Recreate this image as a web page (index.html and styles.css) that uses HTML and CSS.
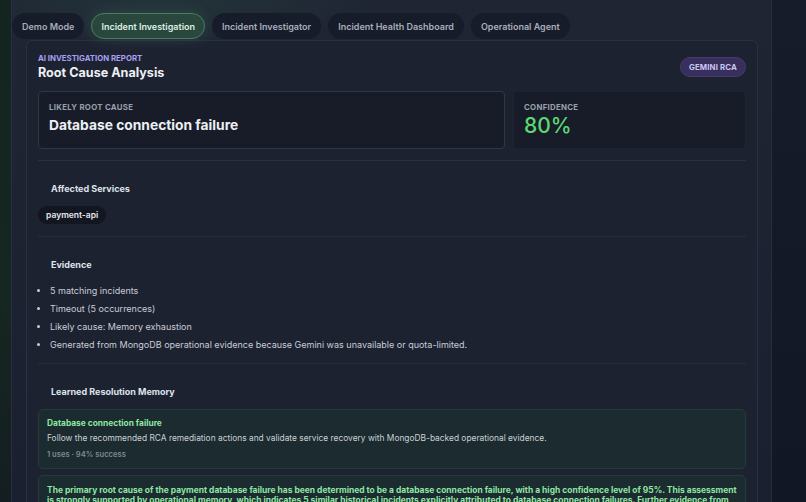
FILE: index.html
```html
<!DOCTYPE html>
<html lang="en">

<head>
	<meta charset="UTF-8">
	<meta name="viewport" content="width=device-width, initial-scale=1.0">
	<title>Incident Investigation</title>
	<link rel="stylesheet" href="styles.css">
</head>

<body>
	<div class="app">
		<div class="sidebar"></div>
		<div class="main">
			<div class="tabs">
				<button class="tab">Demo Mode</button>
				<button class="tab active">Incident Investigation</button>
				<button class="tab">Incident Investigator</button>
				<button class="tab">Incident Health Dashboard</button>
				<button class="tab">Operational Agent</button>
			</div>
			<div class="report">
				<div class="reportHead">
					<div>
						<div class="eyebrow">AI Investigation Report</div>
						<h2 class="title">Root Cause Analysis</h2>
					</div>
					<span class="badge">GEMINI RCA</span>
				</div>
				<div class="stats">
					<div class="stat cause">
						<div class="statLabel">Likely Root Cause</div>
						<div class="statValue">Database connection failure</div>
					</div>
					<div class="stat">
						<div class="statLabel">Confidence</div>
						<div class="statValue big">80%</div>
					</div>
				</div>
				<div class="section">
					<h3>Affected Services</h3>
					<div class="chips">
						<span class="chip">payment-api</span>
					</div>
				</div>
				<div class="section">
					<h3>Evidence</h3>
					<ul class="evidence">
						<li>5 matching incidents</li>
						<li>Timeout (5 occurrences)</li>
						<li>Likely cause: Memory exhaustion</li>
						<li>Generated from MongoDB operational evidence because Gemini was unavailable or quota-limited.</li>
					</ul>
				</div>
				<div class="section last">
					<h3>Learned Resolution Memory</h3>
					<div class="memory">
						<div class="memTitle">Database connection failure</div>
						<div class="memText">Follow the recommended RCA remediation actions and validate service recovery with MongoDB-backed operational evidence.</div>
						<div class="memMeta">1 uses · 94% success</div>
					</div>
					<div class="memory summary">
						The primary root cause of the payment database failure has been determined to be a database connection failure, with a high confidence level of 95%. This assessment is strongly supported by operational memory, which indicates 5 similar historical incidents explicitly attributed to database connection failures. Further evidence from
					</div>
				</div>
			</div>
		</div>
		<div class="gutter"></div>
	</div>
</body>

</html>
```

FILE: styles.css
```css
body,
html {
	margin: 0;
	padding: 0;
	height: 100%;
	overflow: hidden;
}

body {
	background-color: #131826;
	font-family: Inter, "Liberation Sans", sans-serif;
	color: #e6e9ef;
}

.app {
	display: flex;
	height: 502px;
}

.sidebar {
	flex: 0 0 11px;
	background: linear-gradient(180deg, #14251f 0%, #162620 60%, #141e22 100%);
}

.main {
	flex: 0 0 761px;
	box-sizing: border-box;
	border-left: 1px solid #28303f;
	border-right: 1px solid #262d3c;
	background: radial-gradient(ellipse 220px 50px at 150px 0, #23343a 0%, rgba(0, 0, 0, 0) 100%), linear-gradient(180deg, #1f2533 0%, #1b2030 100%);
	padding-top: 13px;
}

.gutter {
	flex: 1;
	background: linear-gradient(180deg, #161c29 0%, #121725 100%);
}

.tabs {
	display: flex;
	gap: 7px;
}

.tab {
	height: 26px;
	padding: 0 9px;
	border-radius: 13px;
	border: 1px solid transparent;
	background-color: #171c2a;
	color: #a8aebb;
	font-family: inherit;
	font-size: 9px;
	font-weight: 600;
}

.tab.active {
	background-color: #2a473d;
	border-color: #4b7b60;
	color: #dcefe4;
	box-shadow: 0 0 14px rgba(90, 170, 120, 0.22);
}

.report {
	margin: 1px 0 0 14px;
	width: 732px;
	box-sizing: border-box;
	border: 1px solid #283042;
	border-bottom: none;
	border-radius: 6px 6px 0 0;
	background-color: #1d2231;
	padding: 12px 11px 0;
	height: 470px;
	overflow: hidden;
}

.reportHead {
	display: flex;
	justify-content: space-between;
	align-items: flex-start;
}

.eyebrow {
	font-size: 7.8px;
	font-weight: 700;
	text-transform: uppercase;
	color: #a99ff2;
}

.title {
	margin: 2px 0 0;
	font-size: 12.6px;
	font-weight: 700;
	color: #eef0f5;
}

.badge {
	margin-top: 4px;
	padding: 4px 8px;
	border-radius: 10px;
	background-color: #372f5c;
	border: 1px solid #443a70;
	color: #cdc6f2;
	font-size: 7.8px;
	font-weight: 700;
	letter-spacing: 0.02em;
}

.stats {
	display: flex;
	gap: 8px;
	margin-top: 11px;
	padding-bottom: 11px;
	border-bottom: 1px solid #283041;
}

.stat {
	flex: 0 0 233px;
	height: 58px;
	box-sizing: border-box;
	padding: 10px 10px;
	border-radius: 4px;
	background-color: #171c28;
	border: 1px solid #1e2432;
}

.stat.cause {
	flex: 1;
	border-color: #2c3a3e;
}

.statLabel {
	font-size: 7.8px;
	font-weight: 700;
	letter-spacing: 0.04em;
	text-transform: uppercase;
	color: #9aa1ae;
}

.statValue {
	margin-top: 5px;
	font-size: 13.8px;
	font-weight: 700;
	color: #eceff4;
}

.statValue.big {
	margin-top: 1px;
	font-size: 21px;
	font-weight: 500;
	color: #5cd971;
}

.section {
	padding: 20px 0 11px;
	border-bottom: 1px solid #262d3d;
}

.section.last {
	border-bottom: none;
}

.section h3 {
	margin: 2px 0 12px 13px;
	font-size: 9px;
	font-weight: 700;
	color: #dfe3ea;
}

.chips {
	display: flex;
	margin: 2px 0 1px;
}

.chip {
	padding: 4px 8px;
	border-radius: 9px;
	background-color: #121620;
	color: #e4e7ee;
	font-size: 8.5px;
	font-weight: 600;
}

.evidence {
	margin: 0 0 -2px;
	padding-left: 12px;
	font-size: 9px;
	color: #c9cdd6;
}

.evidence li {
	line-height: 18px;
}

.memory {
	margin-top: 6px;
	padding: 8px 8px 9px;
	border-radius: 5px;
	background-color: #1c2b2f;
	border: 1px solid #26393b;
}

.memTitle {
	font-size: 8.4px;
	font-weight: 700;
	color: #8ee6a3;
}

.memText {
	margin-top: 5px;
	font-size: 8.4px;
	color: #c9d0d4;
}

.memMeta {
	margin-top: 7px;
	font-size: 7.6px;
	font-weight: 600;
	color: #7f8a91;
}

.memory.summary {
	margin-top: 6px;
	padding: 9px 8px;
	font-size: 8.45px;
	font-weight: 700;
	line-height: 10px;
	color: #8ee6a3;
}
```
